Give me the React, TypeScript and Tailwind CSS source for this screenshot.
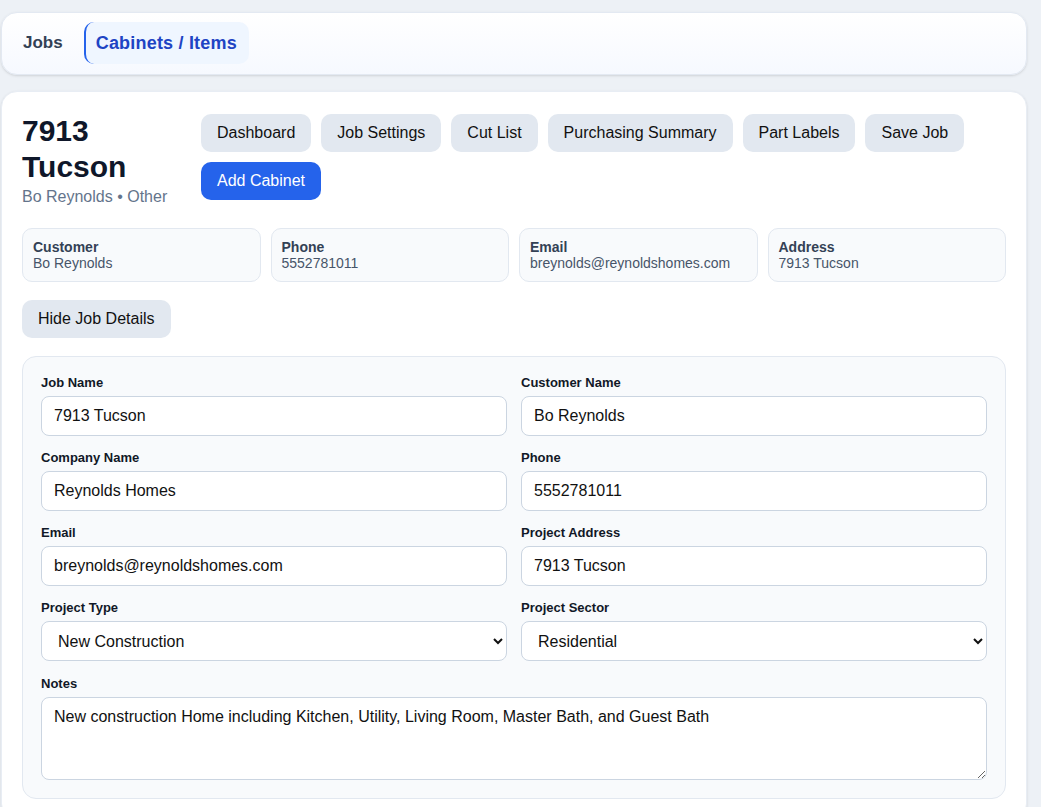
import { useState } from 'react';

const actions = ['Dashboard', 'Job Settings', 'Cut List', 'Purchasing Summary', 'Part Labels', 'Save Job'];

const summary = [
  { label: 'Customer', value: 'Bo Reynolds' },
  { label: 'Phone', value: '5552781011' },
  { label: 'Email', value: 'breynolds@reynoldshomes.com' },
  { label: 'Address', value: '7913 Tucson' },
];

const fields = [
  { label: 'Job Name', value: '7913 Tucson' },
  { label: 'Customer Name', value: 'Bo Reynolds' },
  { label: 'Company Name', value: 'Reynolds Homes' },
  { label: 'Phone', value: '5552781011' },
  { label: 'Email', value: 'breynolds@reynoldshomes.com' },
  { label: 'Project Address', value: '7913 Tucson' },
];

const Field = ({ label, children }: { label: string; children: React.ReactNode }) => (
  <label className="flex flex-col gap-[5px]">
    <span className="text-[13px] leading-4 font-bold text-[#111827]">{label}</span>
    {children}
  </label>
);

const inputClass =
  'h-10 w-full rounded-lg border border-[#cbd5e1] bg-white px-3 text-base text-[#111] outline-none';

const App = () => {
  const [showDetails, setShowDetails] = useState(true);

  return (
    <div className="min-h-screen bg-[#edf1f6] pl-px pr-[14px] pt-3 font-['Liberation_Sans',Arial,sans-serif] text-[#111]">
      <nav className="flex items-center gap-[9px] rounded-2xl border border-[#e3e9f2] bg-linear-to-b from-white to-[#f6f9ff] px-[9px] pb-[10px] pt-[9px] shadow-sm">
        <button className="px-3 py-2 text-[17px] leading-[26px] font-bold text-[#334155]">Jobs</button>
        <button className="rounded-[10px] border-l-2 border-[#2563eb] bg-[#eff6ff] py-2 pl-2.5 pr-3 text-[18px] leading-[26px] font-bold tracking-[0.2px] text-[#1e44c4]">
          Cabinets / Items
        </button>
      </nav>

      <main className="mt-4 rounded-2xl border border-[#e8edf4] bg-white px-5 pb-5 pt-[21px] shadow-sm">
        <div className="flex gap-8">
          <div className="w-[147px] shrink-0">
            <h1 className="text-3xl font-bold text-[#0f172a]">7913 Tucson</h1>
            <p className="text-base leading-6 text-[#64748b]">Bo Reynolds • Other</p>
          </div>
          <div className="mt-px flex flex-1 flex-wrap content-start gap-2.5">
            {actions.map((a) => (
              <button key={a} className="rounded-[10px] bg-[#e2e8f0] px-4 py-[7px] text-base leading-6 text-[#111]">
                {a}
              </button>
            ))}
            <button className="rounded-[10px] bg-[#2563eb] px-4 py-[7px] text-base leading-6 text-white">
              Add Cabinet
            </button>
          </div>
        </div>

        <div className="mt-[19px] grid grid-cols-4 gap-2.5">
          {summary.map((s) => (
            <div key={s.label} className="rounded-[10px] border border-[#e2e8f0] bg-[#f8fafc] px-2.5 py-2.5 text-sm leading-4">
              <div className="font-bold text-[#334155]">{s.label}</div>
              <div className="text-[#475569]">{s.value}</div>
            </div>
          ))}
        </div>

        <button
          onClick={() => setShowDetails((v) => !v)}
          className="mt-[18px] rounded-[10px] bg-[#e2e8f0] px-4 py-[7px] text-base leading-6 text-[#111]"
        >
          {showDetails ? 'Hide Job Details' : 'Show Job Details'}
        </button>

        {showDetails && (
          <div className="mt-[18px] rounded-[14px] border border-[#e2e8f0] bg-[#f8fafc] px-[18px] pb-[18px] pt-[18px]">
            <div className="grid grid-cols-2 gap-x-3.5 gap-y-3.5">
              {fields.map((f) => (
                <Field key={f.label} label={f.label}>
                  <input className={inputClass} defaultValue={f.value} />
                </Field>
              ))}
              <Field label="Project Type">
                <select className={inputClass} defaultValue="New Construction">
                  <option>New Construction</option>
                  <option>Remodel</option>
                  <option>Other</option>
                </select>
              </Field>
              <Field label="Project Sector">
                <select className={inputClass} defaultValue="Residential">
                  <option>Residential</option>
                  <option>Commercial</option>
                </select>
              </Field>
              <div className="col-span-2 mt-px">
                <Field label="Notes">
                  <textarea
                    className="h-[83px] w-full rounded-lg border border-[#cbd5e1] bg-white px-3 py-[7px] text-base leading-6 text-[#111] outline-none"
                    defaultValue="New construction Home including Kitchen, Utility, Living Room, Master Bath, and Guest Bath"
                  />
                </Field>
              </div>
            </div>
          </div>
        )}
      </main>
    </div>
  );
};

export default App;
